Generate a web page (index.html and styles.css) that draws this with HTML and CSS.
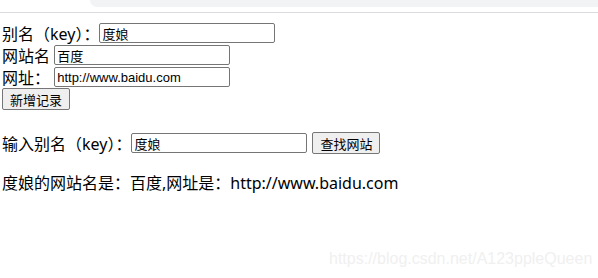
FILE: index.html
```html
<!DOCTYPE html>
<html lang="zh-CN">
<head>
    <meta charset="UTF-8">
    <title>网站记录</title>
    <link rel="stylesheet" href="styles.css">
</head>
<body>
    <div class="chrome">
        <div class="chrome-tab"></div>
    </div>
    <div class="page">
        <div class="row">别名（key）：<input type="text" class="field" value="度娘"></div>
        <div class="row">网站名 <input type="text" class="field" value="百度"></div>
        <div class="row">网址： <input type="text" class="field url" value="http://www.baidu.com"></div>
        <div class="row"><button class="btn">新增记录</button></div>

        <div class="row search">输入别名（key）：<input type="text" class="field" value="度娘"><button class="btn find">查找网站</button></div>

        <div class="result">度娘的网站名是：百度,网址是：http://www.baidu.com</div>
    </div>
    <div class="watermark">https://blog.csdn.net/A123ppleQueen</div>
</body>
</html>
```

FILE: styles.css
```css
body {
    margin: 0;
    font-family: "Noto Sans", "Noto Sans CJK SC", sans-serif;
    font-size: 16px;
    color: #000;
    background: #fff;
    width: 598px;
    height: 278px;
    overflow: hidden;
    position: relative;
}

.chrome {
    height: 12px;
    border-bottom: 1px solid #dadce0;
}

.chrome-tab {
    margin-left: 90px;
    height: 7px;
    background: #f1f3f4;
    border-bottom-left-radius: 8px;
}

.page {
    padding: 9px 0 0 2px;
}

.row {
    display: flex;
    align-items: center;
    height: 22px;
    white-space: pre;
}

.field {
    width: 176px;
    height: 20px;
    box-sizing: border-box;
    margin: 0;
    padding: 1px 2px;
    border: 1px solid #767676;
    border-radius: 2px;
    font-family: "Liberation Sans", "Noto Sans CJK SC", sans-serif;
    font-size: 13px;
}

.btn {
    height: 22px;
    margin: 0;
    padding: 1px 7px;
    border: 1px solid #767676;
    border-radius: 2px;
    background: #efefef;
    font-family: "Liberation Sans", "Noto Sans CJK SC", sans-serif;
    font-size: 13px;
}

.find {
    margin-left: 5px;
}

.search {
    margin-top: 22px;
}

.result {
    margin-top: 16px;
}

.watermark {
    position: absolute;
    left: 329px;
    top: 250px;
    font-family: "Liberation Sans", sans-serif;
    font-size: 16px;
    color: #f0f0f0;
}
```
